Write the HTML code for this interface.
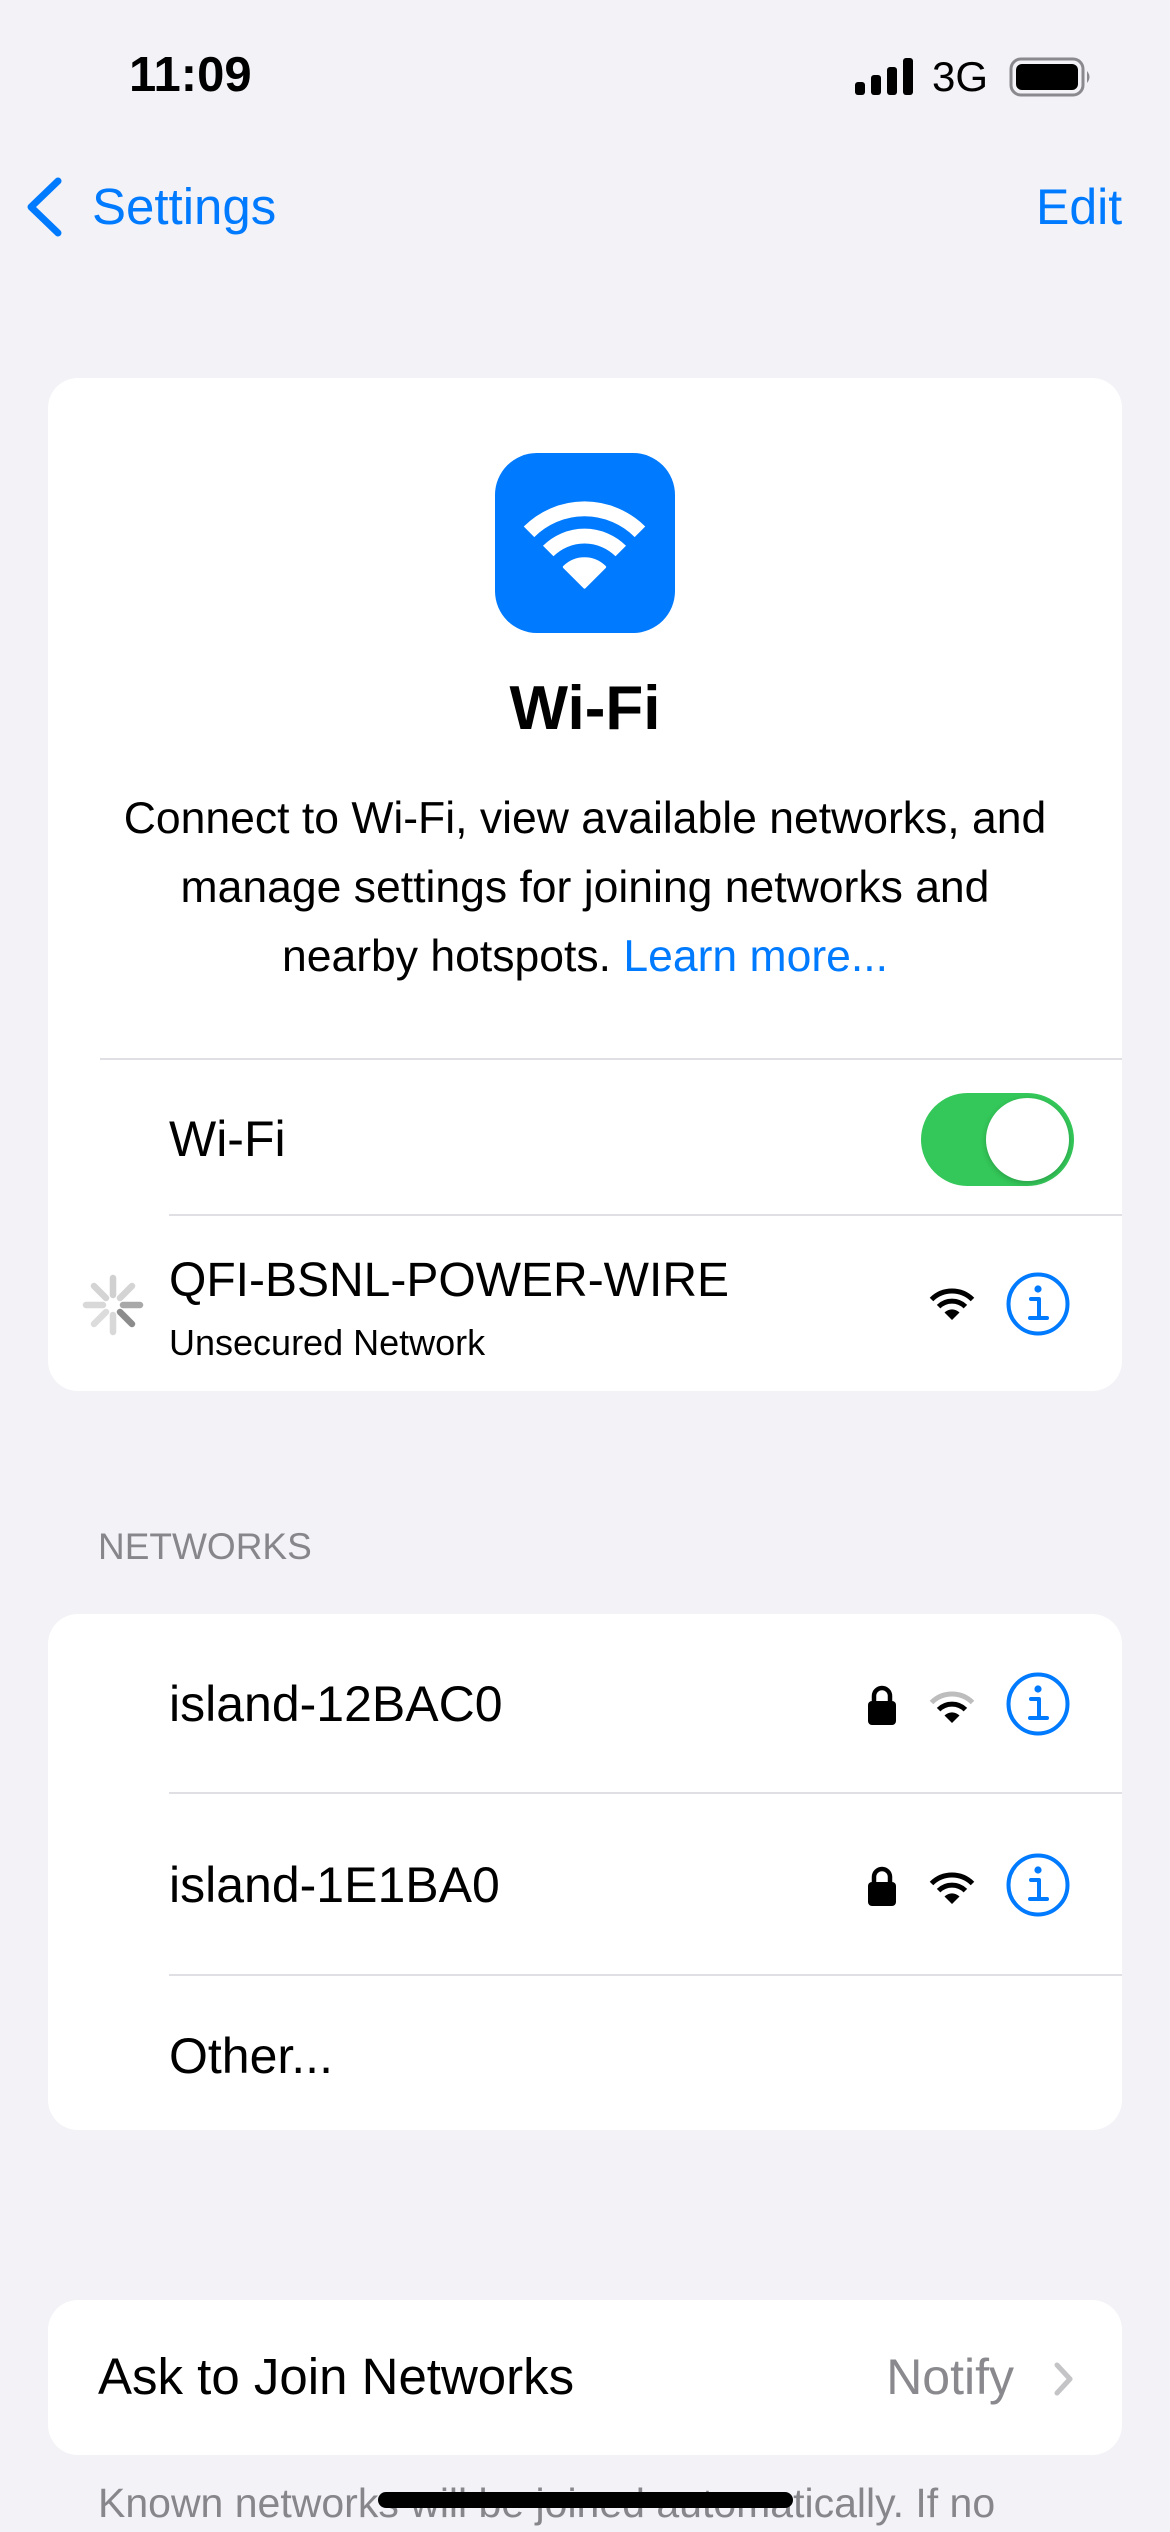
<!DOCTYPE html>
<html><head><meta charset="utf-8"><style>
*{margin:0;padding:0;box-sizing:border-box}
body{width:1170px;height:2532px;background:#f2f2f7;font-family:"Liberation Sans",sans-serif;position:relative;overflow:hidden;color:#000}
.a{position:absolute;white-space:nowrap}
.card{position:absolute;left:48px;width:1074px;background:#fff;border-radius:30px}
.sep{position:absolute;height:2px;background:#e0e0e4;right:0}
.row{font-size:50px;line-height:60px}
</style></head><body>
<div class="a" style="left:129px;top:47px;font-size:49px;font-weight:bold;line-height:56px">11:09</div>
<svg class="a" style="left:855px;top:58px" width="62" height="38" viewBox="0 0 62 38"><rect x="0" y="24" width="10" height="13" rx="3"/><rect x="16" y="17" width="10" height="20" rx="3"/><rect x="32" y="9" width="10" height="28" rx="3"/><rect x="48" y="0" width="10" height="37" rx="3"/></svg>
<div class="a" style="left:932px;top:52px;font-size:42px;line-height:50px">3G</div>
<svg class="a" style="left:1009px;top:57px" width="84" height="40" viewBox="0 0 84 40"><rect x="2" y="2" width="72" height="36" rx="10" fill="none" stroke="#8a8a8e" stroke-width="3"/><rect x="7" y="7" width="62" height="26" rx="6"/><path d="M78 14 Q83 20 78 26 Z" fill="#8a8a8e"/></svg>
<svg class="a" style="left:24px;top:176px" width="42" height="62" viewBox="0 0 42 62"><path d="M34 5 L7 31 L34 57" fill="none" stroke="#007aff" stroke-width="7" stroke-linecap="round" stroke-linejoin="round"/></svg>
<div class="a" style="left:92px;top:177px;font-size:51px;line-height:60px;color:#007aff">Settings</div>
<div class="a" style="left:1036px;top:177px;font-size:50px;line-height:60px;color:#007aff">Edit</div>

<div class="card" style="top:378px;height:1013px">
 <div class="a" style="left:447px;top:75px;width:180px;height:180px;background:#007aff;border-radius:42px"></div>
 <svg class="a" style="left:474px;top:120px" width="125" height="92" viewBox="0 0 46 34"><path d="M23 33 L15.5 25.5 A10.6 10.6 0 0 1 30.5 25.5 Z" fill="#fff" stroke="#fff" stroke-width="1" stroke-linejoin="round"/><path d="M9.6 19.6 A19 19 0 0 1 36.4 19.6" fill="none" stroke="#fff" stroke-width="5.5"/><path d="M2.5 12.5 A29 29 0 0 1 43.5 12.5" fill="none" stroke="#fff" stroke-width="5.5"/></svg>
 <div class="a" style="left:0;width:1074px;text-align:center;top:296px;font-size:62px;font-weight:bold;line-height:70px">Wi-Fi</div>
 <div class="a" style="left:0;width:1074px;text-align:center;top:406px;font-size:44.5px;line-height:69px;white-space:normal">Connect to Wi-Fi, view available networks, and<br>manage settings for joining networks and<br>nearby hotspots. <span style="color:#007aff">Learn more...</span></div>
 <div class="sep" style="left:52px;top:680px"></div>
 <div class="a row" style="left:121px;top:731px">Wi-Fi</div>
 <div class="a" style="left:873px;top:715px;width:153px;height:93px;background:#34c759;border-radius:47px"><div style="position:absolute;right:5px;top:5px;width:83px;height:83px;border-radius:50%;background:#fff;box-shadow:0 2px 6px rgba(0,0,0,.2)"></div></div>
 <div class="sep" style="left:121px;top:836px"></div>
 <svg class="a" style="left:30px;top:892px" width="70" height="70" viewBox="-35 -35 70 70">
  <g stroke-width="6.5" stroke-linecap="round">
  <line x1="0" y1="-10" x2="0" y2="-27" stroke="#d0d0d0"/><line x1="7" y1="-7" x2="19" y2="-19" stroke="#d4d4d4"/><line x1="10" y1="0" x2="27" y2="0" stroke="#a8a8a8"/><line x1="7" y1="7" x2="19" y2="19" stroke="#8c8c8c"/><line x1="0" y1="10" x2="0" y2="27" stroke="#d8d8d8"/><line x1="-7" y1="7" x2="-19" y2="19" stroke="#dcdcdc"/><line x1="-10" y1="0" x2="-27" y2="0" stroke="#d8d8d8"/><line x1="-7" y1="-7" x2="-19" y2="-19" stroke="#d4d4d4"/></g></svg>
 <div class="a" style="left:121px;top:873px;font-size:48px;line-height:60px">QFI-BSNL-POWER-WIRE</div>
 <div class="a" style="left:121px;top:943px;font-size:36px;line-height:44px">Unsecured Network</div>
 <svg class="a" style="left:881px;top:909px" width="46" height="34" viewBox="0 0 46 34"><path d="M23 33 L15.5 25.5 A10.6 10.6 0 0 1 30.5 25.5 Z"/><path d="M9.6 19.6 A19 19 0 0 1 36.4 19.6" fill="none" stroke="#000" stroke-width="5"/><path d="M2.5 12.5 A29 29 0 0 1 43.5 12.5" fill="none" stroke="#000" stroke-width="5"/></svg>
 <svg class="a" style="left:958px;top:894px" width="64" height="64" viewBox="0 0 64 64"><circle cx="32" cy="32" r="29.5" fill="none" stroke="#007aff" stroke-width="4"/><circle cx="32" cy="17" r="3.6" fill="#007aff"/><path d="M25 27 H33 V46 M24 46 H41" fill="none" stroke="#007aff" stroke-width="4" stroke-linecap="round" stroke-linejoin="round"/></svg>
</div>

<div class="a" style="left:98px;top:1525px;font-size:37px;line-height:44px;color:#86868b">NETWORKS</div>
<div class="card" style="top:1614px;height:516px">
 <div class="a row" style="left:121px;top:60px">island-12BAC0</div>
 <svg class="a" style="left:820px;top:71px" width="28" height="40" viewBox="0 0 28 40"><path d="M6 18 V11 A8 8 0 0 1 22 11 V18" fill="none" stroke="#000" stroke-width="4.5"/><rect x="0" y="16" width="28" height="24" rx="4"/></svg>
 <svg class="a" style="left:881px;top:76px" width="46" height="34" viewBox="0 0 46 34"><path d="M23 33 L15.5 25.5 A10.6 10.6 0 0 1 30.5 25.5 Z"/><path d="M9.6 19.6 A19 19 0 0 1 36.4 19.6" fill="none" stroke="#000" stroke-width="5"/><path d="M2.5 12.5 A29 29 0 0 1 43.5 12.5" fill="none" stroke="#bdbdbd" stroke-width="5"/></svg>
 <svg class="a" style="left:958px;top:58px" width="64" height="64" viewBox="0 0 64 64"><circle cx="32" cy="32" r="29.5" fill="none" stroke="#007aff" stroke-width="4"/><circle cx="32" cy="17" r="3.6" fill="#007aff"/><path d="M25 27 H33 V46 M24 46 H41" fill="none" stroke="#007aff" stroke-width="4" stroke-linecap="round" stroke-linejoin="round"/></svg>
 <div class="sep" style="left:121px;top:178px"></div>
 <div class="a row" style="left:121px;top:241px">island-1E1BA0</div>
 <svg class="a" style="left:820px;top:252px" width="28" height="40" viewBox="0 0 28 40"><path d="M6 18 V11 A8 8 0 0 1 22 11 V18" fill="none" stroke="#000" stroke-width="4.5"/><rect x="0" y="16" width="28" height="24" rx="4"/></svg>
 <svg class="a" style="left:881px;top:257px" width="46" height="34" viewBox="0 0 46 34"><path d="M23 33 L15.5 25.5 A10.6 10.6 0 0 1 30.5 25.5 Z"/><path d="M9.6 19.6 A19 19 0 0 1 36.4 19.6" fill="none" stroke="#000" stroke-width="5"/><path d="M2.5 12.5 A29 29 0 0 1 43.5 12.5" fill="none" stroke="#000" stroke-width="5"/></svg>
 <svg class="a" style="left:958px;top:239px" width="64" height="64" viewBox="0 0 64 64"><circle cx="32" cy="32" r="29.5" fill="none" stroke="#007aff" stroke-width="4"/><circle cx="32" cy="17" r="3.6" fill="#007aff"/><path d="M25 27 H33 V46 M24 46 H41" fill="none" stroke="#007aff" stroke-width="4" stroke-linecap="round" stroke-linejoin="round"/></svg>
 <div class="sep" style="left:121px;top:360px"></div>
 <div class="a row" style="left:121px;top:412px">Other...</div>
</div>

<div class="card" style="top:2300px;height:155px">
 <div class="a" style="left:50px;top:47px;font-size:51px;line-height:60px">Ask to Join Networks</div>
 <div class="a row" style="right:108px;top:47px;color:#8a8a8e">Notify</div>
 <svg class="a" style="left:1004px;top:60px" width="24" height="38" viewBox="0 0 24 38"><path d="M5 5 L18 19 L5 33" fill="none" stroke="#c4c4c7" stroke-width="5" stroke-linecap="round" stroke-linejoin="round"/></svg>
</div>
<div class="a" style="left:98px;top:2478px;font-size:41px;line-height:50px;color:#86868b">Known networks will be joined automatically. If no</div>
<div class="a" style="left:378px;top:2492px;width:415px;height:16px;border-radius:8px;background:#000"></div>
</body></html>
